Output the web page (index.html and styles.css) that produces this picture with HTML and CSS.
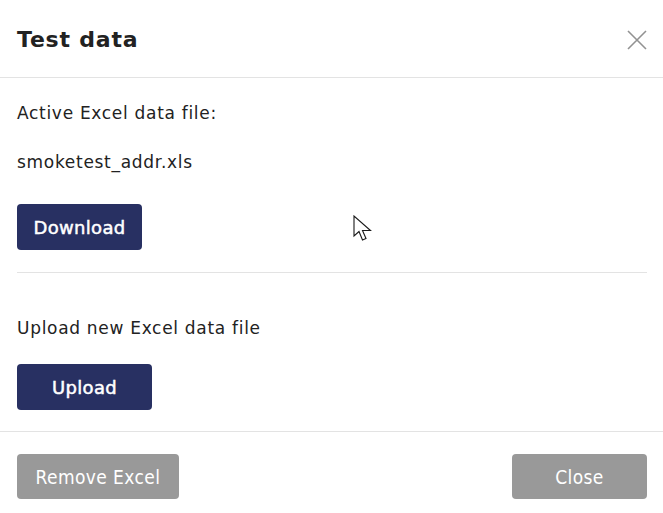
FILE: index.html
```html
<!DOCTYPE html>
<html lang="en">
<head>
  <meta charset="UTF-8" />
  <title>Test data</title>
  <link rel="stylesheet" href="styles.css">
</head>
<body>

<div class="modal">
  <div class="modal-header">
    <h2>Test data</h2>
    <button class="close-x" aria-label="Close">
      <svg width="20" height="20" viewBox="0 0 20 20"><path d="M1 1 L19 19 M19 1 L1 19" stroke="#929292" stroke-width="1.6" fill="none"/></svg>
    </button>
  </div>

  <div class="modal-body">
    <p class="label">Active Excel data file:</p>
    <p class="file-name">smoketest_addr.xls</p>
    <button class="btn btn-primary">Download</button>

    <hr class="divider" />

    <p class="label upload-label">Upload new Excel data file</p>
    <button class="btn btn-primary btn-upload">Upload</button>
  </div>

  <div class="modal-footer">
    <button class="btn btn-grey">Remove Excel</button>
    <button class="btn btn-grey btn-close">Close</button>
  </div>
</div>

<!-- mouse pointer from the screenshot -->
<svg class="pointer" width="20" height="28" viewBox="0 0 20 28">
  <path d="M1 1 L1 21 L6 16.5 L9.5 25 L13 23.5 L9.5 15.5 L17.5 15.5 Z" fill="#fff" stroke="#1a1a1a" stroke-width="1.1" stroke-linejoin="miter"/>
</svg>

</body>
</html>
```

FILE: styles.css
```css
body {
  margin: 0;
  background-color: #fff;
  font-family: 'DejaVu Sans', Verdana, sans-serif;
  color: #222;
}

.modal {
  width: 663px;
  height: 513px;
  display: flex;
  flex-direction: column;
}

.modal-header {
  height: 78px;
  border-bottom: 1px solid #e3e3e3;
  display: flex;
  align-items: center;
  justify-content: space-between;
  padding: 2px 16px 0 17px;
  box-sizing: border-box;
}

.modal-header h2 {
  margin: 0;
  font-size: 22px;
  letter-spacing: 0.8px;
  font-weight: bold;
  color: #222;
}

.close-x {
  background: none;
  border: none;
  padding: 0;
  width: 20px;
  height: 20px;
  cursor: pointer;
}

.modal-body {
  padding: 25px 16px 0 17px;
  height: 354px;
  box-sizing: border-box;
  border-bottom: 1px solid #e3e3e3;
}

.label,
.file-name {
  margin: 0;
  font-size: 17px;
  letter-spacing: 0.7px;
  line-height: 20px;
}

.file-name {
  margin-top: 29px;
}

.btn {
  border: none;
  border-radius: 4px;
  font-family: 'DejaVu Sans', Verdana, sans-serif;
  font-size: 18px;
  letter-spacing: 0.3px;
  font-weight: normal;
  -webkit-text-stroke: 0.5px #fff;
  color: #fff;
  cursor: pointer;
}

.btn-primary {
  background-color: #283062;
  height: 46px;
  width: 125px;
  margin-top: 32px;
  display: block;
}

.btn-upload {
  width: 135px;
  margin-top: 26px;
}

.divider {
  border: none;
  border-top: 1px solid #e3e3e3;
  margin: 22px 0 0;
}

.upload-label {
  margin-top: 45px;
}

.modal-footer {
  display: flex;
  justify-content: space-between;
  padding: 22px 16px 0 17px;
}

.btn-grey {
  background-color: #999;
  height: 45px;
  width: 162px;
  font-family: 'DejaVu Sans Condensed', 'DejaVu Sans', sans-serif;
  font-size: 19px;
  letter-spacing: 0.4px;
  -webkit-text-stroke: 0;
}

.btn-close {
  width: 135px;
}

.pointer {
  position: absolute;
  left: 353px;
  top: 215px;
}
```
